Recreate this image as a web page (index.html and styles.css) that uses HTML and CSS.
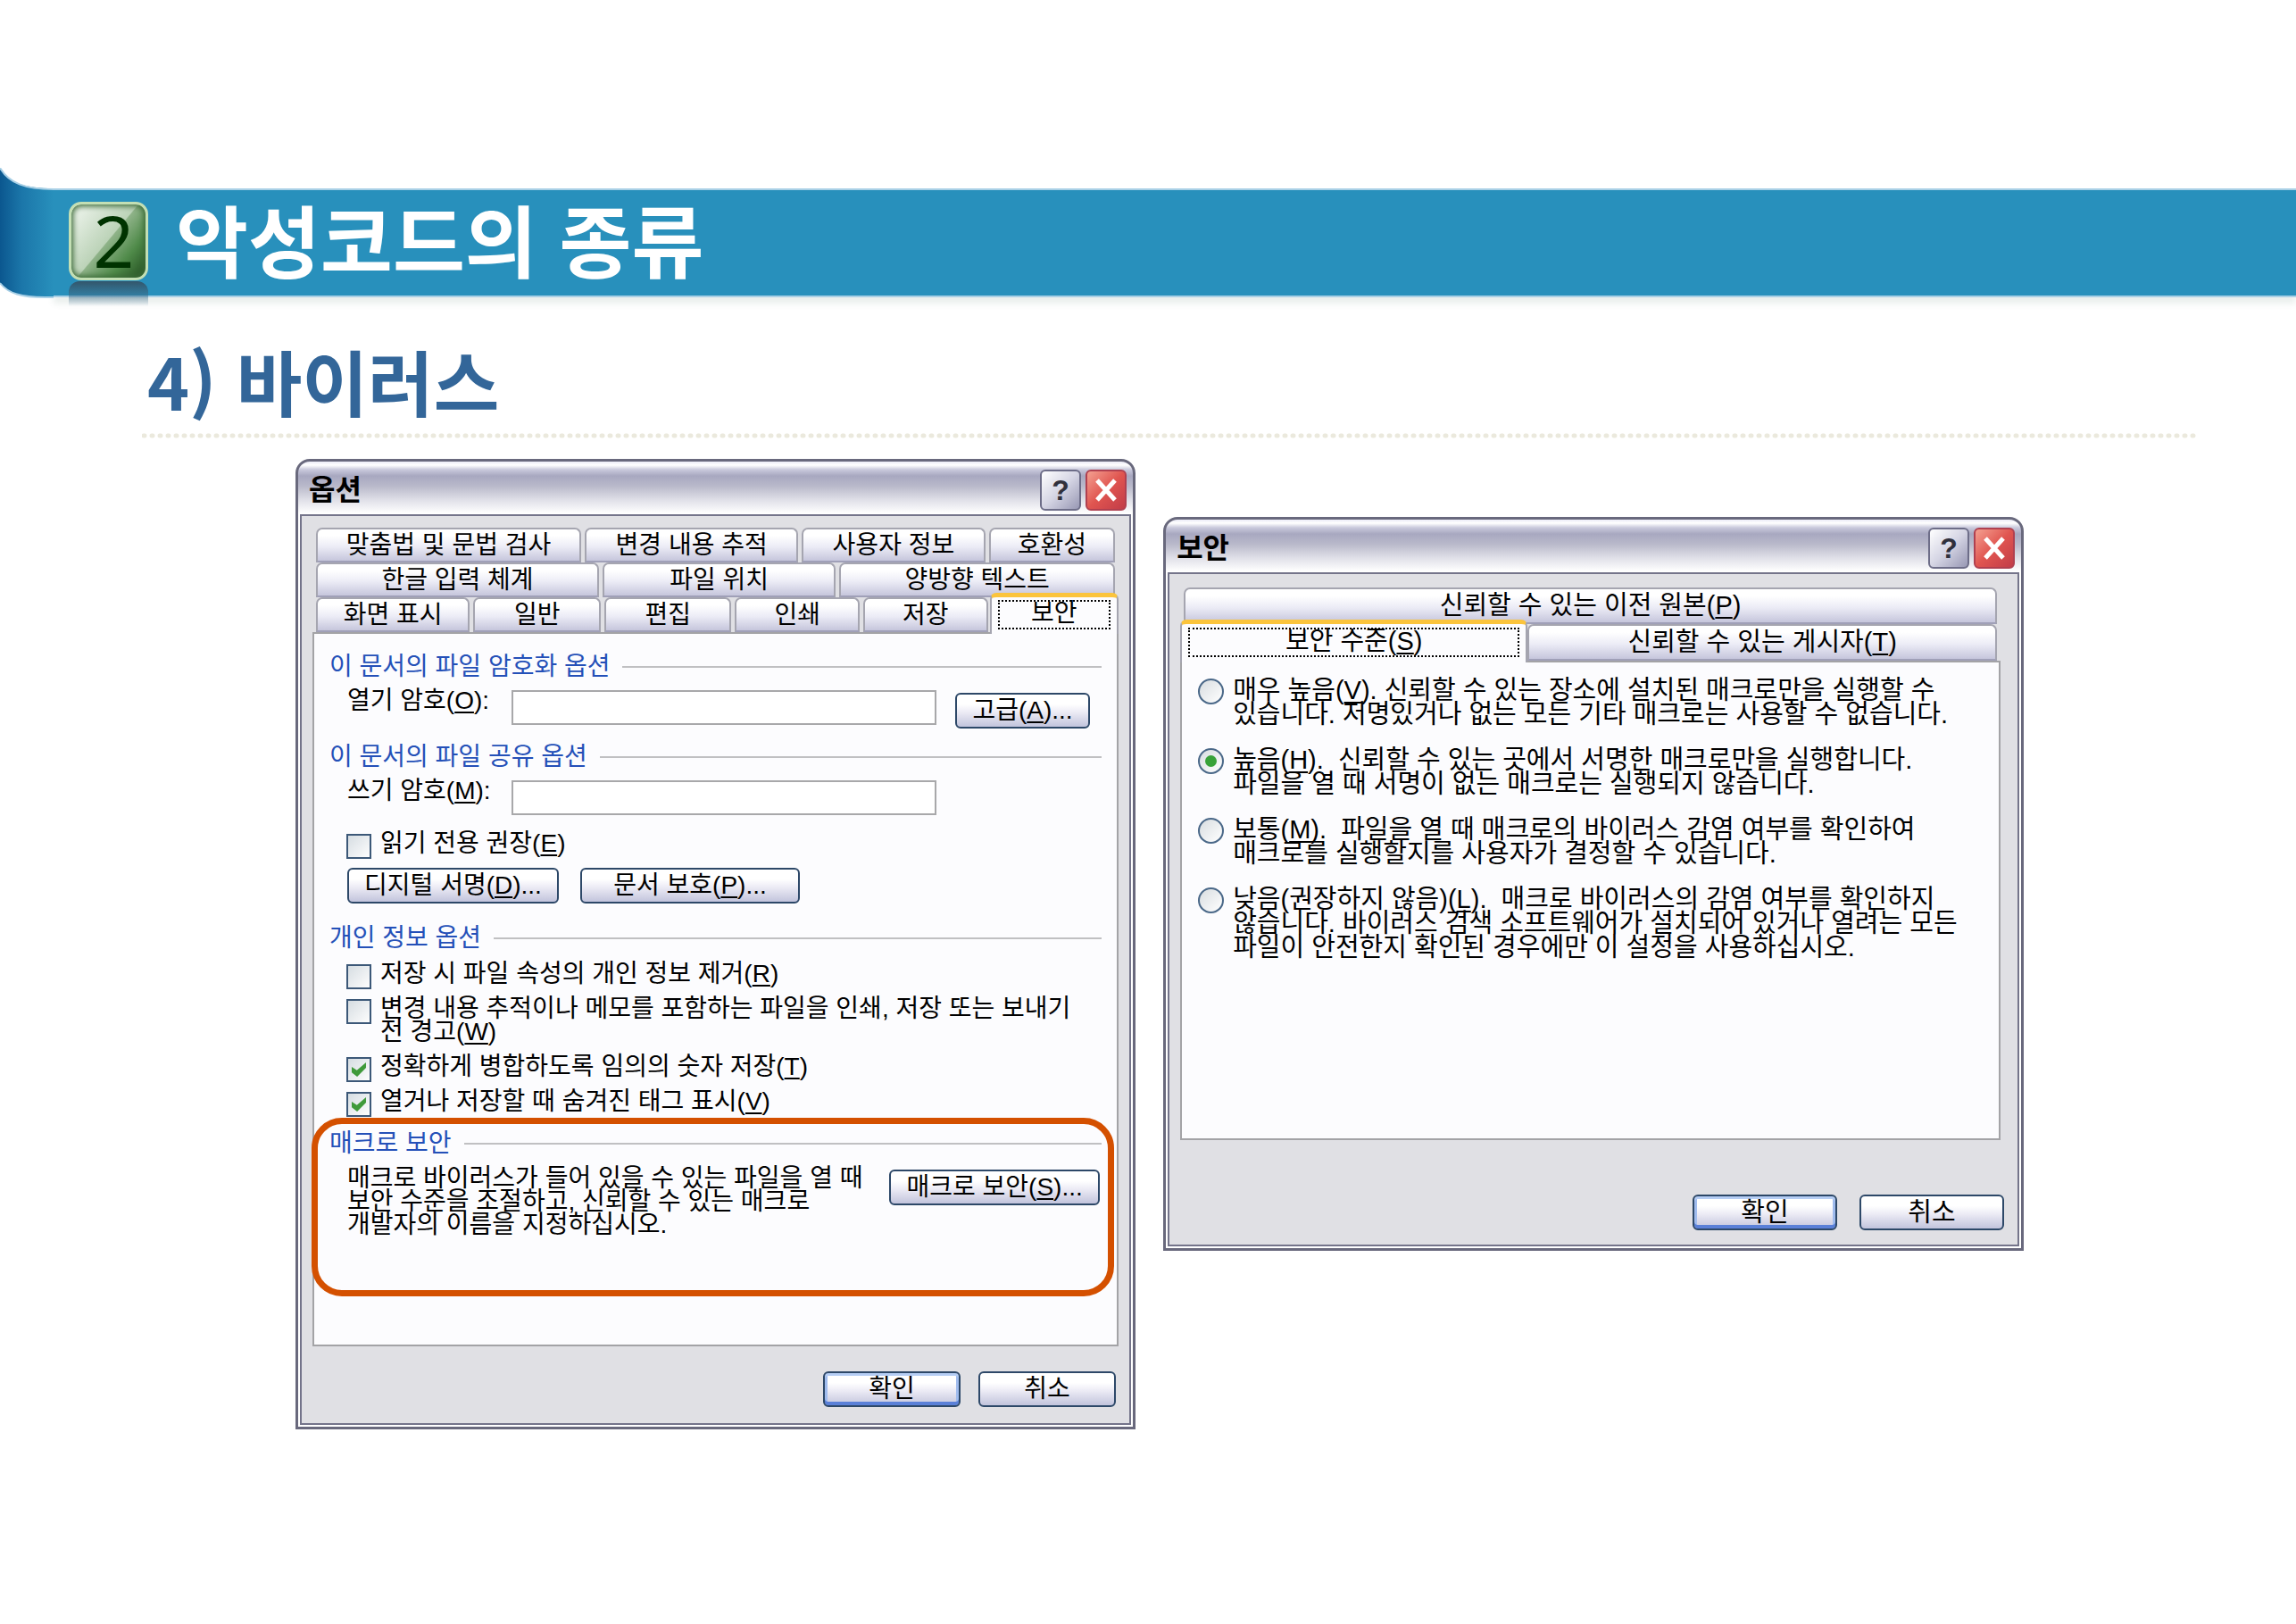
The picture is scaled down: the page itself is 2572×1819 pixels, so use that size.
FILE: index.html
```html
<!DOCTYPE html>
<html lang="ko">
<head>
<meta charset="utf-8">
<title>악성코드의 종류</title>
<link rel="stylesheet" href="styles.css">
</head>
<body>
<header class="banner">
  <svg class="banner-cap" width="60" height="146" viewBox="0 0 60 146" aria-hidden="true">
    <defs>
      <linearGradient id="cap" x1="0" x2="1" y1="0" y2="0">
        <stop offset="0" stop-color="#0b578f"/>
        <stop offset="0.4" stop-color="#1b76a9"/>
        <stop offset="1" stop-color="#2890bc"/>
      </linearGradient>
    </defs>
    <path fill="url(#cap)" d="M0 0C10 17 28 23 60 23V145H50C25 145 9 141 0 129Z"/>
    <path fill="none" stroke="#a9d0e6" stroke-width="2" d="M0 0C10 17 28 24 60 24M60 145H50C25 145 9 141 0 129"/>
  </svg>
  <div class="badge"><span class="badge-number">2</span></div>
  <h1 class="banner-title">악성코드의 종류</h1>
</header>
<main class="slide">
  <h2 class="subtitle">4) 바이러스</h2>
  <svg class="dots" height="6" aria-hidden="true"><line x1="2" y1="3" x2="100%" y2="3"/></svg>

  <div class="dialogs">
    <section class="dialog" aria-label="옵션">
      <div class="titlebar">
        <h3 class="dialog-title">옵션</h3>
        <button class="caption help" type="button" aria-label="도움말">?</button>
        <button class="caption close" type="button" aria-label="닫기"><svg width="28" height="28" viewBox="0 0 28 28"><path d="M4 3L24 25M24 3L4 25"/></svg></button>
      </div>
      <div class="dialog-body">
        <div class="tabs">
          <div class="tab-row row-a">
            <button class="tab" type="button">맞춤법 및 문법 검사</button><button class="tab" type="button">변경 내용 추적</button><button class="tab" type="button">사용자 정보</button><button class="tab" type="button">호환성</button>
          </div>
          <div class="tab-row row-b">
            <button class="tab" type="button">한글 입력 체계</button><button class="tab" type="button">파일 위치</button><button class="tab" type="button">양방향 텍스트</button>
          </div>
          <div class="tab-row row-c">
            <button class="tab" type="button">화면 표시</button><button class="tab" type="button">일반</button><button class="tab" type="button">편집</button><button class="tab" type="button">인쇄</button><button class="tab" type="button">저장</button><button class="tab selected" type="button"><span class="focus">보안</span></button>
          </div>
        </div>
        <div class="panel options-panel">
          <h4 class="group">이 문서의 파일 암호화 옵션</h4>
          <div class="field">
            <label for="open-pw">열기 암호(<u>O</u>):</label>
            <input class="text" id="open-pw" type="text">
            <button class="button advanced" type="button">고급(<u>A</u>)...</button>
          </div>
          <h4 class="group">이 문서의 파일 공유 옵션</h4>
          <div class="field">
            <label for="write-pw">쓰기 암호(<u>M</u>):</label>
            <input class="text" id="write-pw" type="text">
          </div>
          <label class="check readonly"><input type="checkbox"><span>읽기 전용 권장(<u>E</u>)</span></label>
          <div class="button-row">
            <button class="button signature" type="button">디지털 서명(<u>D</u>)...</button>
            <button class="button protect" type="button">문서 보호(<u>P</u>)...</button>
          </div>
          <h4 class="group">개인 정보 옵션</h4>
          <div class="checks">
            <label class="check"><input type="checkbox"><span>저장 시 파일 속성의 개인 정보 제거(<u>R</u>)</span></label>
            <label class="check"><input type="checkbox"><span>변경 내용 추적이나 메모를 포함하는 파일을 인쇄, 저장 또는 보내기<br>전 경고(<u>W</u>)</span></label>
            <label class="check"><input type="checkbox" checked><span>정확하게 병합하도록 임의의 숫자 저장(<u>T</u>)</span></label>
            <label class="check"><input type="checkbox" checked><span>열거나 저장할 때 숨겨진 태그 표시(<u>V</u>)</span></label>
          </div>
          <div class="macro">
            <h4 class="group">매크로 보안</h4>
            <div class="macro-row">
              <p class="macro-text">매크로 바이러스가 들어 있을 수 있는 파일을 열 때<br>보안 수준을 조절하고, 신뢰할 수 있는 매크로<br>개발자의 이름을 지정하십시오.</p>
              <button class="button macro-button" type="button">매크로 보안(<u>S</u>)...</button>
            </div>
          </div>
        </div>
        <div class="actions">
          <button class="button default" type="button">확인</button>
          <button class="button" type="button">취소</button>
        </div>
      </div>
    </section>

    <section class="dialog security" aria-label="보안">
      <div class="titlebar">
        <h3 class="dialog-title">보안</h3>
        <button class="caption help" type="button" aria-label="도움말">?</button>
        <button class="caption close" type="button" aria-label="닫기"><svg width="28" height="28" viewBox="0 0 28 28"><path d="M4 3L24 25M24 3L4 25"/></svg></button>
      </div>
      <div class="dialog-body">
        <div class="tabs">
          <div class="tab-row">
            <button class="tab" type="button">신뢰할 수 있는 이전 원본(<u>P</u>)</button>
          </div>
          <div class="tab-row row-d">
            <button class="tab selected" type="button"><span class="focus">보안 수준(<u>S</u>)</span></button><button class="tab" type="button">신뢰할 수 있는 게시자(<u>T</u>)</button>
          </div>
        </div>
        <div class="panel levels">
          <label class="radio"><input type="radio" name="level"><span>매우 높음(<u>V</u>). 신뢰할 수 있는 장소에 설치된 매크로만을 실행할 수<br>있습니다. 저명있거나 없는 모든 기타 매크로는 사용할 수 없습니다.</span></label>
          <label class="radio"><input type="radio" name="level" checked><span>높음(<u>H</u>).&nbsp; 신뢰할 수 있는 곳에서 서명한 매크로만을 실행합니다.<br>파일을 열 때 서명이 없는 매크로는 실행되지 않습니다.</span></label>
          <label class="radio"><input type="radio" name="level"><span>보통(<u>M</u>).&nbsp; 파일을 열 때 매크로의 바이러스 감염 여부를 확인하여<br>매크로를 실행할지를 사용자가 결정할 수 있습니다.</span></label>
          <label class="radio"><input type="radio" name="level"><span>낮음(권장하지 않음)(<u>L</u>).&nbsp; 매크로 바이러스의 감염 여부를 확인하지<br>않습니다. 바이러스 검색 소프트웨어가 설치되어 있거나 열려는 모든<br>파일이 안전한지 확인된 경우에만 이 설정을 사용하십시오.</span></label>
        </div>
        <div class="actions">
          <button class="button default" type="button">확인</button>
          <button class="button" type="button">취소</button>
        </div>
      </div>
    </section>
  </div>
</main>
</body>
</html>
```
FILE: styles.css
```css
*, *::before, *::after { box-sizing: border-box; }
body {
  margin: 0;
  background: #fff;
  color: #000;
  font-family: "Liberation Sans", "Noto Sans CJK KR", sans-serif;
  font-size: 28px;
  line-height: 26px;
}
h1, h2, h3, h4, p { margin: 0; font-weight: 400; }
button, input { font: inherit; color: inherit; margin: 0; padding: 0; }
u { text-decoration-thickness: 2px; text-underline-offset: 3px; }

/* Banner */
.banner {
  position: relative;
  display: flex;
  align-items: flex-start;
  gap: 31px;
  height: 122px;
  margin: 211px 0 0 60px;
  padding: 13px 0 0 17px;
  background: #2890bc;
  border-top: 2px solid #a9d0e6;
  border-bottom: 2px solid #a9d0e6;
  box-shadow: 0 7px 7px rgba(80, 120, 110, .12);
}
.banner-cap { position: absolute; left: -60px; top: -25px; }
.badge {
  position: relative;
  display: flex;
  justify-content: center;
  width: 89px;
  height: 88px;
  border: 3px solid #c3dfb4;
  border-radius: 14px;
  background: linear-gradient(130deg, #f2f7f1 0%, #bcd3b8 49%, #8fb389 50%, #4f8a49 74%, #214b1e 100%);
  box-shadow: inset 0 0 6px 2px #3c6a38;
}
.badge::after {
  content: "";
  position: absolute;
  left: -3px;
  right: -3px;
  top: 86px;
  height: 28px;
  border-radius: 12px 12px 0 0;
  background: linear-gradient(#33566b, rgba(60, 110, 140, .5) 60%, rgba(160, 180, 190, 0));
}
.badge-number {
  font-family: "Noto Sans", sans-serif;
  font-size: 80px;
  line-height: 80px;
  color: #003300;
  padding-left: 12px;
}
.banner-title {
  font-family: "Noto Sans CJK KR", sans-serif;
  font-weight: 700;
  font-size: 88px;
  line-height: 80px;
  color: #fff;
}

/* Slide */
.subtitle {
  margin: 48px 0 0 165px;
  font-family: "Noto Sans CJK KR", sans-serif;
  font-weight: 700;
  font-size: 80px;
  line-height: 88px;
  color: #336699;
}
.dots {
  display: block;
  width: calc(100% - 270px);
  margin: 16px 0 0 159px;
}
.dots line {
  stroke: #ebe9dd;
  stroke-width: 5;
  stroke-linecap: round;
  stroke-dasharray: 1 8;
}
.dialogs {
  display: flex;
  align-items: flex-start;
  gap: 31px;
  margin: 23px 305px 0 331px;
}

/* Dialog frame */
.dialog {
  flex: 941 1 0;
  min-width: 0;
  padding: 2px;
  border: 3px solid #69697d;
  border-radius: 16px 16px 0 0;
  background: linear-gradient(#ececf7 0, #fff 4px, #c9c9dc 9px, #a8a8c0 16px, #babacb 28px, #e2e2ea 44px, #fff 58px);
}
.security { flex-grow: 964; margin-top: 65px; font-size: 29px; line-height: 27px; }
.titlebar {
  display: flex;
  align-items: center;
  gap: 5px;
  height: 57px;
  padding: 2px 5px 0 10px;
}
.dialog-title {
  flex: 1;
  font-weight: 700;
  font-size: 32px;
  line-height: 32px;
}
.caption {
  display: grid;
  place-items: center;
  width: 46px;
  height: 46px;
  border: 2px solid #6d6d88;
  border-radius: 6px;
  font-weight: 700;
  font-size: 32px;
  line-height: 32px;
}
.help {
  background: linear-gradient(135deg, #fff, #d5d5e4 50%, #9898b4);
  color: #30303c;
}
.close {
  border-color: #b04050;
  background: linear-gradient(135deg, #f4a090, #e05550 50%, #c23c48);
}
.close path { fill: none; stroke: #fff; stroke-width: 5; }
.dialog-body {
  border: 2px solid #74748a;
  background: #e0e0e4;
  padding: 13px 12px 18px 12px;
}
.security .dialog-body { padding: 15px 15px 16px 12px; }

/* Tabs */
.tabs { padding: 0 4px; }
.security .tabs { padding-right: 8px; }
.tab-row { display: grid; gap: 4px; height: 39px; }
.security .tab-row { height: 41px; }
.row-a { grid-template-columns: 298fr 240fr 206fr 142fr; }
.row-b { grid-template-columns: 318fr 262fr 310fr; }
.row-c { grid-template-columns: 173fr 143fr 143fr 140fr 140fr 139fr; }
.row-d { grid-template-columns: 382fr 524fr; gap: 2px; }
.tab {
  border: 2px solid #a5a5b0;
  border-bottom-color: #a0a0b8;
  border-radius: 7px 7px 0 0;
  background: linear-gradient(#fff 20%, #ececf6 55%, #c6c6dc);
  white-space: nowrap;
}
.tab.selected {
  position: relative;
  z-index: 1;
  margin: -5px -4px -2px -2px;
  padding: 3px 7px 5px;
  border-top: 5px solid #fbc43c;
  border-bottom: 0;
  background: #fcfcfe;
}
.row-d .tab.selected { margin: -5px -2px -2px -4px; }
.focus {
  display: block;
  height: 33px;
  border: 2px dotted #000;
}
.panel {
  border: 2px solid #a3a3a6;
  background: #fcfcfe;
}
.options-panel { padding: 24px 17px 48px 17px; }

/* Groups and fields */
.group {
  display: flex;
  align-items: center;
  gap: 14px;
  color: #2450b8;
}
.group::after {
  content: "";
  flex: 1;
  height: 2px;
  background: #c0c0c2;
}
.field {
  display: flex;
  align-items: flex-start;
  min-height: 38px;
  margin: 12px 0 19px 20px;
}
.field label { width: 184px; white-space: nowrap; }
.text {
  flex: 0 1 476px;
  min-width: 0;
  height: 39px;
  margin-top: 1px;
  border: 2px solid #a8a8aa;
  background: #fff;
}
.button {
  height: 40px;
  border: 2px solid #2d4868;
  border-radius: 6px;
  background: linear-gradient(#fff 30%, #ecebf5 55%, #c2c4dc);
  white-space: nowrap;
}
.advanced { width: 151px; margin: 4px 0 0 21px; }
.check, .radio { display: flex; align-items: flex-start; gap: 10px; }
.check input {
  flex: none;
  display: grid;
  place-items: center;
  width: 28px;
  height: 28px;
  margin: 2px 0 -4px;
  appearance: none;
  border: 2px solid #3c5878;
  background: linear-gradient(135deg, #d6dde2, #fdfdfd);
}
.check input:checked::before {
  content: "";
  width: 16px;
  height: 16px;
  background: #3f9a3a;
  clip-path: polygon(0 32%, 36% 55%, 100% 0, 100% 38%, 38% 100%, 0 70%);
}
.readonly { margin: 0 0 14px 19px; }
.button-row { display: flex; gap: 24px; margin: 0 0 26px 20px; }
.signature { width: 237px; }
.protect { width: 246px; }
.checks {
  display: grid;
  gap: 13px;
  margin: 14px 0 21px 19px;
}

/* Macro group with its highlight ring */
.macro { position: relative; min-height: 190px; }
.macro::after {
  content: "";
  position: absolute;
  left: -20px;
  right: -14px;
  top: -16px;
  height: 200px;
  border: 7px solid #d45000;
  border-radius: 34px;
  pointer-events: none;
}
.macro-row {
  display: flex;
  justify-content: space-between;
  align-items: flex-start;
  margin: 13px 2px 0 20px;
}
.macro-text { white-space: nowrap; }
.macro-button { width: 236px; margin-top: 3px; }
.actions {
  display: flex;
  justify-content: flex-end;
  gap: 20px;
  padding: 28px 3px 0 0;
}
.actions .button { width: 154px; }
.default { box-shadow: inset 0 3px #b5cdf4, inset 0 -4px #5a80d8, inset 3px 0 #a0bcee, inset -3px 0 #a0bcee; }

/* Security levels */
.levels {
  display: grid;
  align-content: start;
  gap: 24px;
  min-height: 537px;
  margin-right: 4px;
  padding: 18px;
}
.radio input {
  flex: none;
  display: grid;
  place-items: center;
  width: 29px;
  height: 29px;
  margin: 0 0 -2px;
  appearance: none;
  border: 2px solid #4a6888;
  border-radius: 50%;
  background: linear-gradient(135deg, #d8dde0, #fff);
}
.radio input:checked::before {
  content: "";
  width: 13px;
  height: 13px;
  border-radius: 50%;
  background: #38a238;
}
.radio span { white-space: nowrap; }
.security .actions { gap: 25px; padding: 61px 0 0; }
.security .actions .button { width: 162px; }
```
